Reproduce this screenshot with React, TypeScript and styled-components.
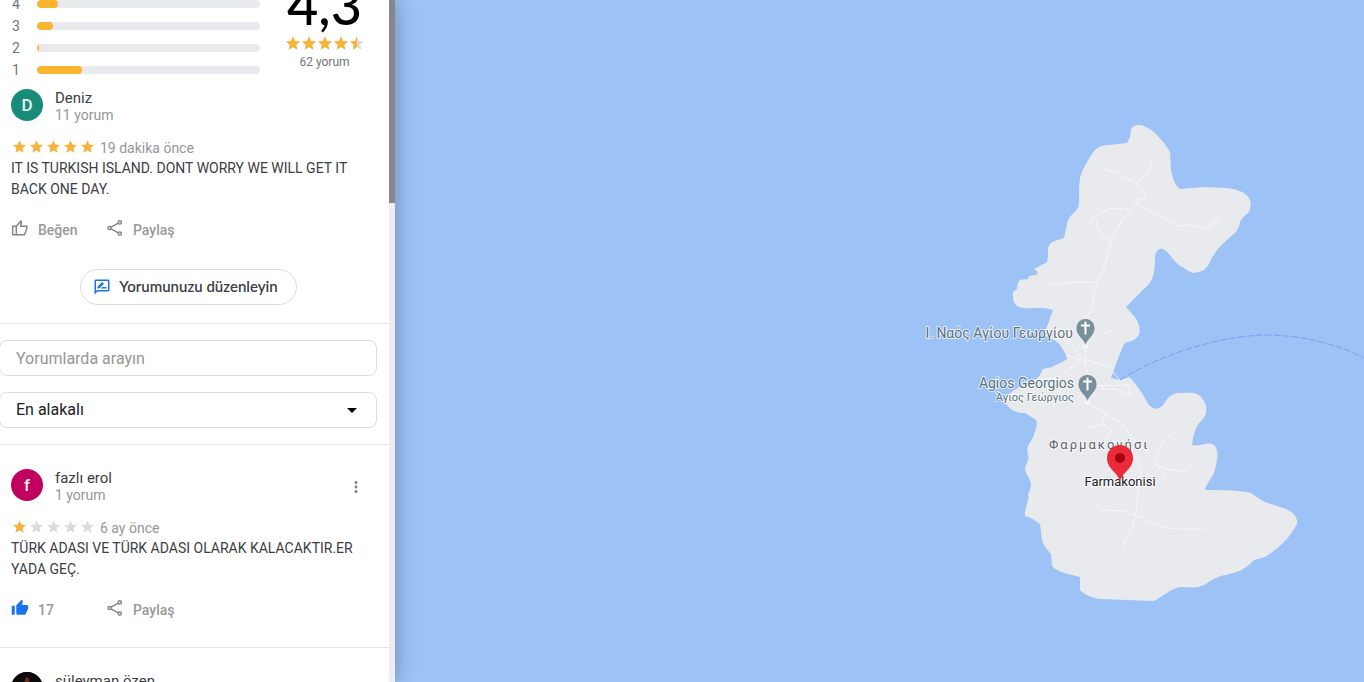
import React from 'react';
import styled, { createGlobalStyle } from 'styled-components';
import { MdMoreVert, MdOutlineRateReview, MdThumbUp } from 'react-icons/md';

const GlobalStyle = createGlobalStyle`
  *, *::before, *::after { box-sizing: border-box; }
  body { margin: 0; font-family: Roboto, "Liberation Sans", sans-serif; color: #3c4043; background: #fff; }
  button, input, select { font: inherit; color: inherit; }
  p, h2, ul { margin: 0; padding: 0; }
`;

const Page = styled.div`
  display: flex;
  height: 100vh;
  overflow: hidden;
`;

const Panel = styled.aside`
  display: flex;
  flex: 0 0 395px;
  z-index: 1;
  background: #fff;
  box-shadow: 0 0 20px rgba(0, 0, 0, 0.3);
`;

const Content = styled.div`
  flex: 1;
  min-width: 0;
  overflow: hidden;
`;

const ScrollTrack = styled.div`
  flex: 0 0 6px;
  background: #eeeeee;
`;

const ScrollThumb = styled.div`
  height: 203px;
  background: #888888;
`;

const Summary = styled.section`
  display: flex;
  margin-top: -29px;
`;

const Bars = styled.ul`
  flex: 1;
  list-style: none;
`;

const BarRow = styled.li`
  display: flex;
  align-items: center;
  height: 22px;
  padding-left: 12px;
  font-size: 14px;
  color: #70757a;
`;

const BarLabel = styled.span`
  width: 25px;
`;

const BarTrack = styled.span`
  flex: 1;
  height: 8px;
  border-radius: 4px;
  overflow: hidden;
  background: #e8eaed;
`;

const BarFill = styled.span`
  display: block;
  height: 100%;
  border-radius: 4px;
  background: #fbb42f;
`;

const Score = styled.div`
  display: flex;
  flex-direction: column;
  align-items: center;
  width: 129px;
  padding-top: 2px;
`;

const ScoreValue = styled.span`
  font-family: Lato, sans-serif;
  font-size: 54px;
  font-weight: 500;
  line-height: 63px;
  color: #000;
`;

const ScoreCount = styled.span`
  font-size: 12px;
  line-height: 24px;
  color: #70757a;
`;

const StarRow = styled.span<{ $gap: number }>`
  display: flex;
  align-items: center;
  gap: ${(p) => p.$gap}px;
`;

const ReviewBox = styled.article<{ $divided?: boolean }>`
  padding: ${(p) => (p.$divided ? '24px 12px 25px 11px' : '8px 12px 0 11px')};
  border-bottom: ${(p) => (p.$divided ? '1px solid #e1e3e6' : 'none')};
`;

const Header = styled.header`
  display: flex;
  gap: 12px;
  height: 36px;
`;

const Avatar = styled.span<{ $color: string }>`
  display: grid;
  place-items: center;
  width: 32px;
  height: 32px;
  border-radius: 50%;
  overflow: hidden;
  background: ${(p) => p.$color};
  color: #e6f3f0;
  font-size: 17px;
  font-weight: 500;
`;

const Person = styled.div`
  flex: 1;
`;

const Name = styled.h2`
  font-size: 15px;
  font-weight: 400;
  line-height: 18px;
  color: #3c4043;
`;

const Count = styled.p`
  font-size: 14px;
  line-height: 17px;
  color: #969696;
`;

const MenuButton = styled.button`
  align-self: center;
  display: grid;
  place-items: center;
  width: 18px;
  height: 18px;
  margin-right: 12px;
  padding: 0;
  border: 0;
  background: none;
  color: #80868b;
`;

const Meta = styled.div`
  display: flex;
  align-items: center;
  gap: 6px;
  height: 20px;
  margin-top: 13px;
  padding-left: 2px;
  > :first-child { padding-bottom: 3px; }
`;

const When = styled.span`
  font-size: 14px;
  line-height: 20px;
  color: #969696;
`;

const Body = styled.p`
  font-size: 14px;
  line-height: 21px;
  color: #3c4043;
`;

const Actions = styled.div`
  display: flex;
  margin-top: 18px;
`;

const Action = styled.button`
  display: flex;
  align-items: center;
  gap: 9px;
  min-width: 96px;
  height: 24px;
  padding: 0;
  border: 0;
  background: none;
  font-size: 14px;
  font-weight: 500;
  color: #999999;
  > svg { margin-bottom: 4px; }
`;

const EditRow = styled.div`
  display: flex;
  justify-content: center;
  padding: 27px 12px 18px 0;
  border-bottom: 1px solid #e1e3e6;
`;

const EditButton = styled.button`
  display: flex;
  align-items: center;
  gap: 8px;
  height: 36px;
  padding: 0 18px 2px 12px;
  border: 1px solid #dadce0;
  border-radius: 18px;
  background: #fff;
  font-family: Lato, sans-serif;
  font-size: 15px;
  font-weight: 600;
  > svg { margin-top: 2px; }
`;

const Filters = styled.form`
  display: grid;
  gap: 16px;
  padding: 16px 12px 16px 0;
  border-bottom: 1px solid #e1e3e6;
`;

const Field = styled.label`
  display: grid;
  align-items: center;
  margin-left: -1px;
  > * { grid-area: 1 / 1; }
  > svg { justify-self: end; margin-right: 20px; pointer-events: none; }
`;

const fieldStyle = `
  appearance: none;
  width: 100%;
  height: 36px;
  padding: 0 16px;
  border: 1px solid #dadce0;
  border-radius: 8px;
  background: #fff;
  font-size: 16px;
`;

const SearchInput = styled.input`
  ${fieldStyle}
  &::placeholder { color: #969696; opacity: 1; }
`;

const SortSelect = styled.select`
  ${fieldStyle}
  padding-bottom: 2px;
  color: #202124;
`;

const MapArea = styled.main`
  flex: 1;
  min-width: 0;
  background: #9dc2f6;
`;

const MapSvg = styled.svg`
  display: block;
  width: 100%;
  height: 100%;
`;

const PlaceLabel = styled.text<{ $size: number; $color: string; $spacing?: number }>`
  font-size: ${(p) => p.$size}px;
  letter-spacing: ${(p) => p.$spacing ?? 0}px;
  fill: ${(p) => p.$color};
  stroke: #ffffff;
  stroke-opacity: 0.75;
  stroke-width: 2px;
  stroke-linejoin: round;
  paint-order: stroke;
`;

const STAR = 'M12 17.27 18.18 21l-1.64-7.03L22 9.24l-7.19-.61L12 2 9.19 8.63 2 9.24l5.46 4.73L5.82 21z';

function Star({ size, fill }: { size: number; fill: number }) {
  return (
    <svg width={size} height={size} viewBox="2 2 20 19" aria-hidden="true">
      <path d={STAR} fill="#dadce0" />
      {fill > 0 && <path d={STAR} fill="#f9b238" style={{ clipPath: `inset(0 ${(1 - fill) * 100}% 0 0)` }} />}
    </svg>
  );
}

function Stars({ value, size, gap }: { value: number; size: number; gap: number }) {
  return (
    <StarRow $gap={gap} role="img" aria-label={`${value} yıldız`}>
      {[0, 1, 2, 3, 4].map((i) => (
        <Star key={i} size={size} fill={Math.max(0, Math.min(1, value - i))} />
      ))}
    </StarRow>
  );
}

function ThumbOutline() {
  return (
    <svg width="18" height="18" viewBox="0 0 18 18" fill="none" stroke="#80868b" strokeWidth="1.5" aria-hidden="true">
      <path d="M1.7 7.2h3.6v8.6H1.7zM5.3 7.2l4.5-5 .7.8-.8 4.2h6.2v2.2l-2.4 6.4H5.3" />
    </svg>
  );
}

function ShareIcon() {
  return (
    <svg width="17" height="18" viewBox="0 0 17 18" fill="none" stroke="#80868b" strokeWidth="1.5" aria-hidden="true">
      <circle cx="2.6" cy="9" r="1.6" />
      <circle cx="12.8" cy="3.4" r="1.6" />
      <circle cx="12.8" cy="14.6" r="1.6" />
      <path d="M4.100 8.200l7.200-4M4.100 9.800l7.200 4" />
    </svg>
  );
}

type ReviewProps = {
  name: string;
  count?: string;
  avatar: React.ReactNode;
  color: string;
  rating: number;
  when?: string;
  text?: string;
  likes?: number;
  own?: boolean;
};

function Review({ name, count, avatar, color, rating, when, text, likes, own }: ReviewProps) {
  return (
    <ReviewBox $divided={!own}>
      <Header>
        <Avatar $color={color}>{avatar}</Avatar>
        <Person>
          <Name>{name}</Name>
          {count && <Count>{count}</Count>}
        </Person>
        {!own && (
          <MenuButton aria-label="Diğer işlemler">
            <MdMoreVert size={18} />
          </MenuButton>
        )}
      </Header>
      {text && (
        <>
          <Meta>
            <Stars value={rating} size={13} gap={4} />
            <When>{when}</When>
          </Meta>
          <Body>{text}</Body>
          <Actions>
            <Action>
              {likes ? <MdThumbUp size={18} color="#1a73e8" /> : <ThumbOutline />}
              {likes ?? 'Beğen'}
            </Action>
            <Action>
              <ShareIcon />
              Paylaş
            </Action>
          </Actions>
        </>
      )}
    </ReviewBox>
  );
}

function PhotoAvatar() {
  return (
    <svg width="32" height="32" viewBox="0 0 32 32" aria-hidden="true">
      <rect width="32" height="32" fill="#0c0a0a" />
      <path d="M14 7q2-4 4 0l1 6h-6z" fill="#6b2a22" />
    </svg>
  );
}

function ChurchPin({ x, y }: { x: number; y: number }) {
  return (
    <g transform={`translate(${x} ${y})`}>
      <ellipse cx="0" cy="17" rx="3" ry="2" fill="#fff" opacity="0.6" />
      <path d="M0 17C-1.500 10-9.500 7-9.500-1a9.500 9.500 0 0 1 19 0C9.500 7 1.500 10 0 17z" fill="#78909c" stroke="#fff" strokeWidth="0.6" />
      <path d="M0-7.500V5.500M-4.500-3.500H4.500" stroke="#fff" strokeWidth="2" />
    </g>
  );
}

const ISLAND =
  'M1131 129C1134 124 1141 124 1146 127C1155 131 1165 143 1170 152C1171 161 1170 170 1173 178C1175 184 1177 187 1180 189' +
  'L1204 187C1218 188 1233 187 1242 192C1249 196 1252 201 1250 208C1250 214 1243 215 1240 222C1239 230 1234 234 1228 239' +
  'C1219 247 1213 254 1209 264C1206 270 1201 272 1193 273C1187 271 1184 267 1180 266C1174 262 1170 253 1163 249' +
  'C1158 248 1155 252 1155 258C1155 273 1153 281 1146 287L1126 307L1134 316C1140 323 1141 333 1138 336C1134 342 1127 341 1124 344' +
  'C1119 355 1115 367 1111 378L1120 380L1129 377C1137 384 1143 395 1149 405C1153 410 1159 410 1164 404C1169 395 1174 392 1184 393' +
  'C1194 391 1201 394 1205 403C1208 411 1206 417 1200 422C1194 429 1193 439 1192 445C1202 447 1208 441 1214 445' +
  'C1220 451 1217 462 1214 473C1210 480 1206 485 1205 490C1220 490 1240 490 1251 493L1261 500C1269 504 1277 506 1286 509' +
  'C1295 513 1298 519 1297 524C1289 539 1278 549 1265 557L1254 560C1248 566 1243 570 1237 572C1228 575 1218 575 1209 582' +
  'C1201 588 1193 588 1181 587C1171 588 1164 596 1154 601L1100 599C1090 598 1083 593 1080 590L1080 577L1068 574' +
  'C1058 571 1052 568 1052 565L1051 554C1045 547 1043 544 1042 540L1040 524L1031 518L1025 516C1024 507 1030 502 1028 494' +
  'C1033 485 1031 481 1026 473C1023 466 1030 462 1028 455C1025 443 1033 442 1034 434C1038 424 1038 420 1033 418L1025 413' +
  'C1014 413 1007 408 1005 400C1010 390 1022 386 1034 380C1041 377 1041 371 1043 369L1052 367C1061 362 1067 361 1067 358' +
  'C1062 345 1057 341 1050 338L1044 335L1053 310C1040 306 1027 310 1019 307C1013 304 1013 300 1013 292C1015 290 1018 290 1017 286' +
  'C1020 279 1018 280 1028 279L1029 276L1036 275L1038 272L1034 269L1047 262L1048 256L1048 248C1051 242 1050 243 1055 241L1064 238' +
  'C1067 226 1067 220 1070 217C1076 209 1080 211 1079 196C1079 176 1081 173 1086 164C1094 149 1098 145 1109 145L1127 143L1130 137Z';

const ROADS =
  'M1101 168L1117 173L1136 183L1143 190Q1149 198 1142 199Q1137 197 1137 203C1125 216 1112 232 1110 246C1106 262 1104 272 1097 282' +
  'C1091 300 1094 315 1085 316V340L1086 365M1152 161Q1151 170 1148 174L1136 183M1137 203L1155 215L1165 219L1178 226L1190 225L1206 229L1216 226' +
  'M1203 228L1214 223L1220 216M1128 210L1113 208Q1095 212 1090 224M1097 220Q1095 229 1102 234L1110 244M1050 284L1080 282L1097 282' +
  'M1100 332Q1105 335 1112 330M1060 337L1074 347L1081 358L1108 367L1120 380M1066 355L1081 360L1071 367L1060 377L1034 381' +
  'M1084 360L1088 374L1096 386L1128 385L1131 395L1115 389L1100 389M1087 403L1120 422L1133 438L1155 460L1165 479M1106 411L1102 424L1088 428' +
  'M1102 424L1112 430L1105 440M1155 460Q1161 450 1163 443Q1169 434 1179 428M1155 465L1170 470L1184 471Q1191 469 1194 463' +
  'M1133 453Q1142 466 1140 480L1136 510L1133 525L1125 540L1123 548M1095 503L1103 510L1125 511Q1130 516 1144 517C1158 529 1170 530 1204 529';

function IslandMap() {
  return (
    <MapSvg viewBox="395 0 969 682" preserveAspectRatio="xMidYMid slice" role="img" aria-label="Farmakonisi haritası">
      <path d={ISLAND} fill="#e8eaed" />
      <path d={ROADS} fill="none" stroke="#fafbfc" strokeWidth="1" strokeOpacity="0.75" />
      <path d="M1120 380C1160 355 1215 337 1262 335C1300 334 1340 345 1364 358" fill="none" stroke="#76a3ea" strokeWidth="1" strokeDasharray="7 2" />
      <PlaceLabel x="1073" y="338" textAnchor="end" $size={14} $color="#5b7380">Ι. Ναός Αγίου Γεωργίου</PlaceLabel>
      <PlaceLabel x="1074" y="388" textAnchor="end" $size={14} $color="#5b7380">Agios Georgios</PlaceLabel>
      <PlaceLabel x="1074" y="401" textAnchor="end" $size={11} $color="#5b7380">Άγιος Γεώργιος</PlaceLabel>
      <ChurchPin x={1085.5} y={329} />
      <ChurchPin x={1087.5} y={385} />
      <PlaceLabel x="1049" y="449" $size={13} $color="#5f6368" $spacing={2}>Φαρμακονήσι</PlaceLabel>
      <PlaceLabel x="1120" y="486" textAnchor="middle" $size={13} $color="#202124">Farmakonisi</PlaceLabel>
      <path d="M1120 483C1119 472 1107 470 1107 458a13 13 0 0 1 26 0C1133 470 1121 472 1120 483z" fill="#ea2b3a" />
      <circle cx="1120" cy="458" r="5" fill="#a50011" />
    </MapSvg>
  );
}

const BARS = [
  { stars: 5, width: 170 },
  { stars: 4, width: 21 },
  { stars: 3, width: 16 },
  { stars: 2, width: 2 },
  { stars: 1, width: 45 },
];

export default function App() {
  return (
    <Page>
      <GlobalStyle />
      <Panel>
        <Content>
          <Summary>
            <Bars>
              {BARS.map((b) => (
                <BarRow key={b.stars}>
                  <BarLabel>{b.stars}</BarLabel>
                  <BarTrack>
                    <BarFill style={{ width: `${(b.width / 223) * 100}%` }} />
                  </BarTrack>
                </BarRow>
              ))}
            </Bars>
            <Score>
              <ScoreValue>4,3</ScoreValue>
              <Stars value={4.5} size={14} gap={2} />
              <ScoreCount>62 yorum</ScoreCount>
            </Score>
          </Summary>
          <Review
            own
            name="Deniz"
            count="11 yorum"
            avatar="D"
            color="#198c79"
            rating={5}
            when="19 dakika önce"
            text="IT IS TURKISH ISLAND. DONT WORRY WE WILL GET IT BACK ONE DAY."
          />
          <EditRow>
            <EditButton>
              <MdOutlineRateReview size={18} color="#1a73e8" />
              Yorumunuzu düzenleyin
            </EditButton>
          </EditRow>
          <Filters>
            <Field>
              <SearchInput type="text" aria-label="Yorumlarda arayın" placeholder="Yorumlarda arayın" />
            </Field>
            <Field>
              <SortSelect aria-label="Sıralama" defaultValue="relevant">
                <option value="relevant">En alakalı</option>
              </SortSelect>
              <svg width="10" height="5" viewBox="0 0 10 5" aria-hidden="true">
                <path d="M0 0h10L5 5z" fill="#000" />
              </svg>
            </Field>
          </Filters>
          <Review
            name="fazlı erol"
            count="1 yorum"
            avatar="f"
            color="#c2015e"
            rating={1}
            when="6 ay önce"
            text="TÜRK ADASI VE TÜRK ADASI OLARAK KALACAKTIR.ER YADA GEÇ."
            likes={17}
          />
          <Review name="süleyman özen" avatar={<PhotoAvatar />} color="#0c0a0a" rating={5} />
        </Content>
        <ScrollTrack>
          <ScrollThumb />
        </ScrollTrack>
      </Panel>
      <MapArea>
        <IslandMap />
      </MapArea>
    </Page>
  );
}
